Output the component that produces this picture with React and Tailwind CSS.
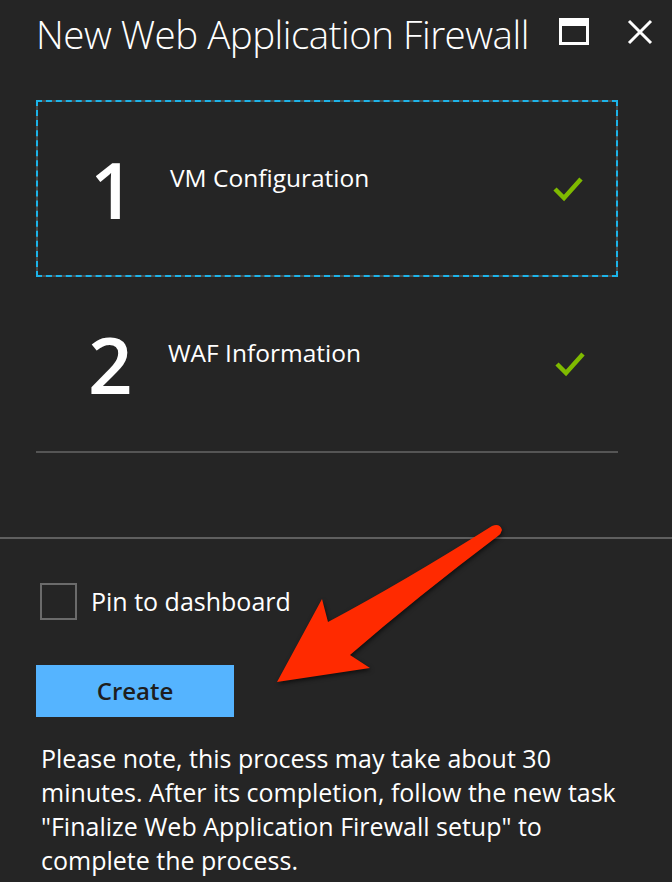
import React from "react";

const font = { fontFamily: '"Open Sans", "Noto Sans", sans-serif' };

function Check() {
  return (
    <svg width="30" height="26" viewBox="0 0 30 26" className="shrink-0">
      <path d="M2 13 L11 22 L28 3" fill="none" stroke="#7fba00" strokeWidth="4.5" />
    </svg>
  );
}

function Step({ num, label, active }) {
  return (
    <div
      className={
        active
          ? "border-2 border-dashed border-[#1cb4ea] bg-[#4b4b4b] h-[177px]"
          : "border-b-2 border-[#555555] h-[176px]"
      }
    >
      <div className="flex h-full items-center bg-[#252525] pl-[52px] pr-[33px]">
        <div className="w-[80px] text-[78px] font-semibold leading-none text-white">{num}</div>
        <div className="flex-1 self-start pt-[58px] text-[24.5px] text-white">{label}</div>
        <Check />
      </div>
    </div>
  );
}

export default function App() {
  return (
    <div className="relative h-[882px] w-[672px] overflow-hidden bg-[#252525] text-white" style={font}>
      {/* header */}
      <div className="flex h-[100px] items-start pl-[36px] pr-[19px] pt-[8px]">
        <h1 className="flex-1 text-[38.5px] font-light leading-[52px] tracking-[-0.5px]">
          New Web Application Firewall
        </h1>
        <div className="mt-[10px] flex items-center gap-[38px]">
          <div className="h-[27px] w-[30px] border-x-[3px] border-b-[3px] border-t-[8px] border-white" />
          <svg width="26" height="26" viewBox="0 0 26 26">
            <path d="M2 2 L24 24 M24 2 L2 24" stroke="white" strokeWidth="3" />
          </svg>
        </div>
      </div>

      {/* steps */}
      <div className="mx-[36px] w-[582px]">
        <Step num="1" label="VM Configuration" active />
        <Step num="2" label="WAF Information" />
      </div>

      <div className="mt-[84px] h-[2px] w-full bg-[#5f5f5f]" />

      {/* footer */}
      <div className="px-[36px]">
        <label className="mt-[44px] flex items-center gap-[14px] pl-[4px]">
          <span className="h-[37px] w-[37px] border-2 border-[#6b6b6b]" />
          <span className="text-[25px]">Pin to dashboard</span>
        </label>
        <button className="mt-[44px] flex h-[52px] w-[198px] items-center justify-center bg-[#55b4ff] text-[24px] font-semibold text-[#1e1e1e]">
          Create
        </button>
        <p className="mt-[24px] pl-[5px] text-[25px] leading-[34px]">
          Please note, this process may take about 30
          <br />
          minutes. After its completion, follow the new task
          <br />
          "Finalize Web Application Firewall setup" to
          <br />
          complete the process.
        </p>
      </div>

      {/* annotation arrow */}
      <svg
        className="pointer-events-none absolute left-0 top-0"
        width="672"
        height="882"
        viewBox="0 0 672 882"
        style={{ filter: "drop-shadow(1px 2px 2px rgba(0,0,0,0.6))" }}
      >
        <path
          d="M277 682 L322 599 L328 622 Q403 582 492 526 Q500 523 502 530 Q501 534 498 536 Q417 597 350 655 L370 668 Z"
          fill="#ff2a00"
        />
      </svg>
    </div>
  );
}
